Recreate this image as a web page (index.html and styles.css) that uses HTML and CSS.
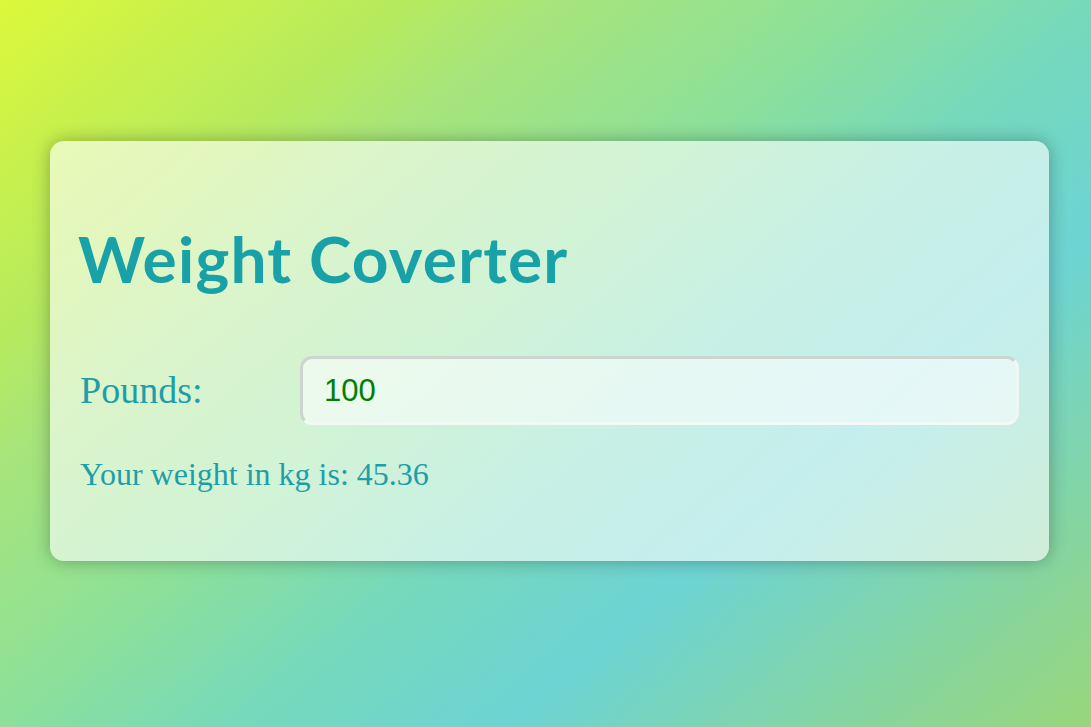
FILE: index.html
```html
<!DOCTYPE html>
<html lang="en">
<head>
<meta charset="utf-8">
<title>Weight Coverter</title>
<link rel="stylesheet" href="styles.css">
</head>
<body>
  <main class="card">
    <h1 class="title">Weight Coverter</h1>
    <div class="row">
      <label class="label" for="pounds">Pounds:</label>
      <input class="field" id="pounds" type="text" value="100">
    </div>
    <p class="result">Your weight in kg is: 45.36</p>
  </main>
</body>
</html>
```

FILE: styles.css
```css
html, body {
  margin: 0;
  padding: 0;
}

body {
  width: 1091px;
  height: 727px;
  overflow: hidden;
  background: linear-gradient(140deg, #dcf83a 0%, #b5ea5f 21%, #a8e57a 28%, #8ce09a 44%, #76d9bb 56%, #6dd4d4 70%, #98d67a 100%);
  font-family: "Liberation Serif", "Times New Roman", serif;
  padding-top: 141px;
  padding-left: 50px;
  box-sizing: border-box;
}

.card {
  width: 999px;
  height: 420px;
  box-sizing: border-box;
  padding: 46px 30px 0 30px;
  border-radius: 14px;
  background: rgba(255, 255, 255, 0.6);
  box-shadow: 0 0 18px rgba(0, 0, 0, 0.3);
  display: flex;
  flex-direction: column;
}

.title {
  margin: 34px 0 0 -2px;
  font-family: "Lato", "Open Sans", sans-serif;
  font-weight: 700;
  font-size: 64px;
  letter-spacing: 1.2px;
  line-height: 1.2;
  color: #19a1a8;
}

.row {
  margin-top: 58px;
  display: grid;
  grid-template-columns: 220px 1fr;
  align-items: center;
}

.label {
  font-size: 38px;
  line-height: 44px;
  color: #1e9ea8;
}

.field {
  height: 69px;
  box-sizing: border-box;
  border-width: 3px;
  border-style: solid;
  border-color: #cdd5d1 #eef7f3 #f2faf6 #cdd5d1;
  border-radius: 12px;
  background: rgba(255, 255, 255, 0.55);
  padding: 2px 20px 0 21px;
  font-family: "Liberation Sans", Arial, sans-serif;
  font-size: 31px;
  color: #008000;
  outline: none;
}

.result {
  margin: 31px 0 0 0;
  font-size: 32px;
  line-height: 36px;
  color: #1e9ea8;
}
```
